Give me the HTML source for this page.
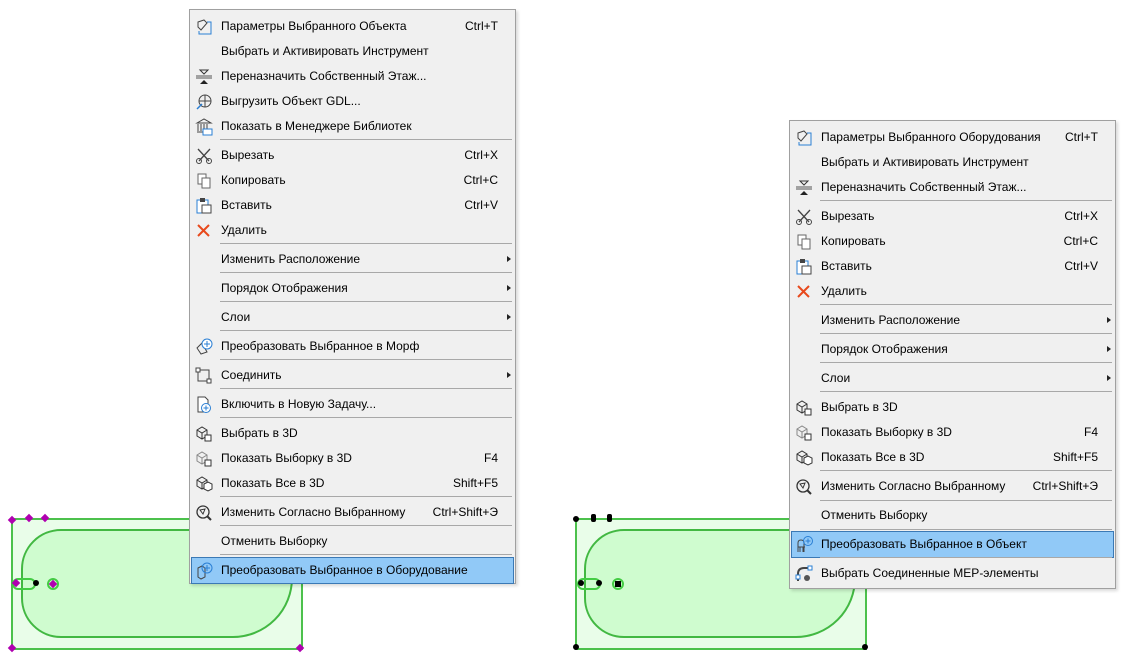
<!DOCTYPE html>
<html><head><meta charset="utf-8"><style>
body{margin:0;width:1127px;height:664px;background:#fff;position:relative;overflow:hidden;font-family:"Liberation Sans",sans-serif;font-size:12px;color:#000}
.m{position:absolute;background:#f0f0f0;border:1px solid #a0a0a0;box-shadow:2px 2px 3px rgba(0,0,0,.15)}
.r{position:absolute;left:0;right:0;height:25px;line-height:25px}
.r .t{position:absolute;left:31px}
.r .k{position:absolute;right:17px}
.r .a{position:absolute;right:4px;top:9px;width:0;height:0;border-left:4px solid #222;border-top:3.5px solid transparent;border-bottom:3.5px solid transparent}
.r svg{position:absolute;left:5px;top:4px}
.s{position:absolute;left:30px;right:3px;height:1px;background:#a8a8a8}
.h{background:#91c9f7;outline:1px solid #3b79b5;left:2px;right:2px}
.h .t{left:29px}.h svg{left:3px}
.sh{position:absolute;background:#e9fde9;border:2px solid #4cc14c}
.in{position:absolute;background:#cffccf;border:2px solid #42b842;border-radius:40px 40px 60px 40px}
.d{position:absolute;width:6px;height:6px;background:#b000b0;transform:rotate(45deg)}
.b{position:absolute;width:6px;height:6px;background:#000;border-radius:50%}
</style></head><body>

<div class="sh" style="left:11px;top:518px;width:288px;height:128px"></div>
<div class="in" style="left:21px;top:529px;width:268px;height:105px"></div>
<div class="d" style="left:9px;top:517px"></div><div class="d" style="left:26px;top:515px"></div><div class="d" style="left:42px;top:515px"></div>
<div class="d" style="left:9px;top:645px"></div><div class="d" style="left:297px;top:645px"></div>
<div style="position:absolute;left:12px;top:578px;width:20px;height:8px;border:2px solid #4c4;border-radius:6px"></div>
<div class="d" style="left:13px;top:580px"></div><div class="b" style="left:33px;top:580px"></div>
<div style="position:absolute;left:47px;top:578px;width:8px;height:8px;border:2px solid #4c4;border-radius:50%"></div><div class="d" style="left:50px;top:581px"></div>

<div class="sh" style="left:575px;top:518px;width:288px;height:128px"></div>
<div class="in" style="left:584px;top:529px;width:268px;height:105px"></div>
<div class="b" style="left:573px;top:516px"></div><div class="b" style="left:591px;top:514px;width:5px;height:8px;border-radius:2px"></div><div class="b" style="left:607px;top:514px;width:5px;height:8px;border-radius:2px"></div>
<div class="b" style="left:573px;top:644px"></div><div class="b" style="left:862px;top:644px"></div>
<div style="position:absolute;left:577px;top:578px;width:20px;height:8px;border:2px solid #4c4;border-radius:6px"></div>
<div class="b" style="left:578px;top:580px"></div><div class="b" style="left:596px;top:580px"></div>
<div style="position:absolute;left:612px;top:578px;width:8px;height:8px;border:2px solid #4c4;border-radius:50%"></div><div class="b" style="left:615px;top:581px;border-radius:0"></div>

<!-- Menu 1 -->
<div class="m" style="left:189px;top:9px;width:325px;height:573px">
<div class="r" style="top:4px"><svg width="18" height="18"><path d="M3 4l6-2 3 3-6 7-3-3z" fill="none" stroke="#444"/><path d="M12 4h4v12H4v-3" fill="none" stroke="#2a7fd4"/></svg><span class="t">Параметры Выбранного Объекта</span><span class="k">Ctrl+T</span></div>
<div class="r" style="top:29px"><span class="t">Выбрать и Активировать Инструмент</span></div>
<div class="r" style="top:54px"><svg width="18" height="18"><path d="M5 2h8l-4 4z" fill="none" stroke="#333"/><path d="M1 8h16M1 10h16" stroke="#555"/><path d="M5 16h8l-4-4z" fill="#222"/></svg><span class="t">Переназначить Собственный Этаж...</span></div>
<div class="r" style="top:79px"><svg width="18" height="18"><circle cx="10" cy="8" r="6" fill="none" stroke="#444"/><path d="M4 8h12M10 2v12" stroke="#444"/><path d="M2 16l5-5" stroke="#2a7fd4" stroke-width="1.5"/></svg><span class="t">Выгрузить Объект GDL...</span></div>
<div class="r" style="top:104px"><svg width="18" height="18"><path d="M2 5l7-4 7 4zM3 6v7M6 6v7M9 6v7M12 6v7M2 14h14" stroke="#444" fill="none"/><rect x="8" y="11" width="9" height="6" fill="#fff" stroke="#2a7fd4"/></svg><span class="t">Показать в Менеджере Библиотек</span></div>
<div class="s" style="top:129px"></div>
<div class="r" style="top:133px"><svg width="18" height="18"><path d="M3 2l11 12M15 2L4 14" stroke="#444" stroke-width="1.3"/><circle cx="4" cy="14" r="2.5" fill="none" stroke="#444"/><circle cx="14" cy="14" r="2.5" fill="none" stroke="#444"/></svg><span class="t">Вырезать</span><span class="k">Ctrl+X</span></div>
<div class="r" style="top:158px"><svg width="18" height="18"><rect x="3" y="2" width="8" height="10" fill="#fff" stroke="#666"/><rect x="7" y="6" width="8" height="10" fill="#fff" stroke="#666"/></svg><span class="t">Копировать</span><span class="k">Ctrl+C</span></div>
<div class="r" style="top:183px"><svg width="18" height="18"><rect x="2" y="3" width="11" height="13" fill="#fff" stroke="#2a7fd4"/><rect x="5" y="1" width="5" height="4" fill="#444"/><rect x="7" y="8" width="9" height="8" fill="#fff" stroke="#444"/></svg><span class="t">Вставить</span><span class="k">Ctrl+V</span></div>
<div class="r" style="top:208px"><svg width="18" height="18"><path d="M3 3l11 11M14 3L3 14" stroke="#e8491c" stroke-width="2"/></svg><span class="t">Удалить</span></div>
<div class="s" style="top:233px"></div>
<div class="r" style="top:237px"><span class="t">Изменить Расположение</span><span class="a"></span></div>
<div class="s" style="top:262px"></div>
<div class="r" style="top:266px"><span class="t">Порядок Отображения</span><span class="a"></span></div>
<div class="s" style="top:291px"></div>
<div class="r" style="top:295px"><span class="t">Слои</span><span class="a"></span></div>
<div class="s" style="top:320px"></div>
<div class="r" style="top:324px"><svg width="18" height="18"><path d="M2 10l5-5 5 9-6 2z" fill="none" stroke="#444"/><circle cx="12" cy="6" r="5" fill="#fff" stroke="#2a7fd4"/><path d="M12 3v6M9 6h6" stroke="#2a7fd4"/></svg><span class="t">Преобразовать Выбранное в Морф</span></div>
<div class="s" style="top:349px"></div>
<div class="r" style="top:353px"><svg width="18" height="18"><rect x="3" y="3" width="11" height="11" fill="none" stroke="#444"/><rect x="1" y="1" width="4" height="4" fill="#fff" stroke="#444"/><rect x="12" y="12" width="4" height="4" fill="#fff" stroke="#444"/></svg><span class="t">Соединить</span><span class="a"></span></div>
<div class="s" style="top:378px"></div>
<div class="r" style="top:382px"><svg width="18" height="18"><path d="M3 1h7l3 3v12H3z" fill="#fff" stroke="#444"/><circle cx="11" cy="12" r="4.5" fill="#fff" stroke="#2a7fd4"/><path d="M11 9.5v5M8.5 12h5" stroke="#2a7fd4"/></svg><span class="t">Включить в Новую Задачу...</span></div>
<div class="s" style="top:407px"></div>
<div class="r" style="top:411px"><svg width="18" height="18"><path d="M2 5l5-3 5 3v6l-5 3-5-3z M7 8v6M2 5l5 3 5-3" fill="none" stroke="#333"/><rect x="10" y="10" width="6" height="6" fill="#fff" stroke="#333"/></svg><span class="t">Выбрать в 3D</span></div>
<div class="r" style="top:436px"><svg width="18" height="18"><path d="M2 5l5-3 5 3v6l-5 3-5-3z M7 8v6M2 5l5 3 5-3" fill="none" stroke="#888"/><rect x="10" y="10" width="6" height="6" fill="#fff" stroke="#333"/></svg><span class="t">Показать Выборку в 3D</span><span class="k">F4</span></div>
<div class="r" style="top:461px"><svg width="18" height="18"><path d="M2 5l5-3 5 3v6l-5 3-5-3z M7 8v6M2 5l5 3 5-3" fill="none" stroke="#333"/><path d="M9 9l4-2 4 2v5l-4 2-4-2z" fill="#fff" stroke="#333"/></svg><span class="t">Показать Все в 3D</span><span class="k">Shift+F5</span></div>
<div class="s" style="top:486px"></div>
<div class="r" style="top:490px"><svg width="18" height="18"><circle cx="8" cy="8" r="6" fill="none" stroke="#333" stroke-width="1.3"/><path d="M5 6l5-1-2 5z" fill="none" stroke="#333"/><path d="M12 12l4 4" stroke="#333" stroke-width="2"/></svg><span class="t">Изменить Согласно Выбранному</span><span class="k">Ctrl+Shift+Э</span></div>
<div class="s" style="top:515px"></div>
<div class="r" style="top:519px"><span class="t">Отменить Выборку</span></div>
<div class="s" style="top:544px"></div>
<div class="r h" style="top:548px"><svg width="18" height="18"><path d="M3 6l4-2 3 2v9l-4 2-3-2z" fill="none" stroke="#444"/><circle cx="12" cy="6" r="5" fill="none" stroke="#2a7fd4"/><path d="M12 3v6M9 6h6" stroke="#2a7fd4"/></svg><span class="t">Преобразовать Выбранное в Оборудование</span></div>
</div>

<!-- Menu 2 -->
<div class="m" style="left:789px;top:120px;width:325px;height:467px">
<div class="r" style="top:4px"><svg width="18" height="18"><path d="M3 4l6-2 3 3-6 7-3-3z" fill="none" stroke="#444"/><path d="M12 4h4v12H4v-3" fill="none" stroke="#2a7fd4"/></svg><span class="t">Параметры Выбранного Оборудования</span><span class="k">Ctrl+T</span></div>
<div class="r" style="top:29px"><span class="t">Выбрать и Активировать Инструмент</span></div>
<div class="r" style="top:54px"><svg width="18" height="18"><path d="M5 2h8l-4 4z" fill="none" stroke="#333"/><path d="M1 8h16M1 10h16" stroke="#555"/><path d="M5 16h8l-4-4z" fill="#222"/></svg><span class="t">Переназначить Собственный Этаж...</span></div>
<div class="s" style="top:79px"></div>
<div class="r" style="top:83px"><svg width="18" height="18"><path d="M3 2l11 12M15 2L4 14" stroke="#444" stroke-width="1.3"/><circle cx="4" cy="14" r="2.5" fill="none" stroke="#444"/><circle cx="14" cy="14" r="2.5" fill="none" stroke="#444"/></svg><span class="t">Вырезать</span><span class="k">Ctrl+X</span></div>
<div class="r" style="top:108px"><svg width="18" height="18"><rect x="3" y="2" width="8" height="10" fill="#fff" stroke="#666"/><rect x="7" y="6" width="8" height="10" fill="#fff" stroke="#666"/></svg><span class="t">Копировать</span><span class="k">Ctrl+C</span></div>
<div class="r" style="top:133px"><svg width="18" height="18"><rect x="2" y="3" width="11" height="13" fill="#fff" stroke="#2a7fd4"/><rect x="5" y="1" width="5" height="4" fill="#444"/><rect x="7" y="8" width="9" height="8" fill="#fff" stroke="#444"/></svg><span class="t">Вставить</span><span class="k">Ctrl+V</span></div>
<div class="r" style="top:158px"><svg width="18" height="18"><path d="M3 3l11 11M14 3L3 14" stroke="#e8491c" stroke-width="2"/></svg><span class="t">Удалить</span></div>
<div class="s" style="top:183px"></div>
<div class="r" style="top:187px"><span class="t">Изменить Расположение</span><span class="a"></span></div>
<div class="s" style="top:212px"></div>
<div class="r" style="top:216px"><span class="t">Порядок Отображения</span><span class="a"></span></div>
<div class="s" style="top:241px"></div>
<div class="r" style="top:245px"><span class="t">Слои</span><span class="a"></span></div>
<div class="s" style="top:270px"></div>
<div class="r" style="top:274px"><svg width="18" height="18"><path d="M2 5l5-3 5 3v6l-5 3-5-3z M7 8v6M2 5l5 3 5-3" fill="none" stroke="#333"/><rect x="10" y="10" width="6" height="6" fill="#fff" stroke="#333"/></svg><span class="t">Выбрать в 3D</span></div>
<div class="r" style="top:299px"><svg width="18" height="18"><path d="M2 5l5-3 5 3v6l-5 3-5-3z M7 8v6M2 5l5 3 5-3" fill="none" stroke="#888"/><rect x="10" y="10" width="6" height="6" fill="#fff" stroke="#333"/></svg><span class="t">Показать Выборку в 3D</span><span class="k">F4</span></div>
<div class="r" style="top:324px"><svg width="18" height="18"><path d="M2 5l5-3 5 3v6l-5 3-5-3z M7 8v6M2 5l5 3 5-3" fill="none" stroke="#333"/><path d="M9 9l4-2 4 2v5l-4 2-4-2z" fill="#fff" stroke="#333"/></svg><span class="t">Показать Все в 3D</span><span class="k">Shift+F5</span></div>
<div class="s" style="top:349px"></div>
<div class="r" style="top:353px"><svg width="18" height="18"><circle cx="8" cy="8" r="6" fill="none" stroke="#333" stroke-width="1.3"/><path d="M5 6l5-1-2 5z" fill="none" stroke="#333"/><path d="M12 12l4 4" stroke="#333" stroke-width="2"/></svg><span class="t">Изменить Согласно Выбранному</span><span class="k">Ctrl+Shift+Э</span></div>
<div class="s" style="top:379px"></div>
<div class="r" style="top:382px"><span class="t">Отменить Выборку</span></div>
<div class="s" style="top:408px"></div>
<div class="r h" style="top:411px"><svg width="18" height="18"><path d="M3 16V7q0-3 3-3t3 3v9M3 11h7M5 11v5M8 11v5" fill="none" stroke="#444"/><circle cx="13" cy="5" r="4.5" fill="none" stroke="#2a7fd4"/><path d="M13 2.5v5M10.5 5h5" stroke="#2a7fd4"/></svg><span class="t">Преобразовать Выбранное в Объект</span></div>
<div class="s" style="top:436px"></div>
<div class="r" style="top:440px"><svg width="18" height="18"><path d="M3 16V9q0-6 6-6h6" fill="none" stroke="#444" stroke-width="2"/><rect x="1" y="10" width="4" height="4" fill="#fff" stroke="#2a7fd4"/><rect x="13" y="1" width="4" height="4" fill="#fff" stroke="#2a7fd4"/><circle cx="12" cy="13" r="3" fill="#555"/></svg><span class="t">Выбрать Соединенные MEP-элементы</span></div>
</div>
</body></html>
